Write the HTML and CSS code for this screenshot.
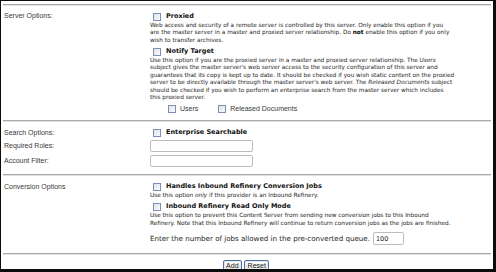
FILE: index.html
```html
<!DOCTYPE html>
<html>
<head>
<meta charset="utf-8">
<link rel="stylesheet" href="styles.css">
</head>
<body>
<div class="frame">
  <div class="sep first"></div>

  <section class="row server">
    <div class="label">Server Options:</div>
    <div class="field">
      <label class="opt"><input type="checkbox" class="cb"><b>Proxied</b></label>
      <p class="desc">Web access and security of a remote server is controlled by this server. Only enable this option if you<br>are the master server in a master and proxied server relationship. Do <b>not</b> enable this option if you only<br>wish to transfer archives.</p>
      <label class="opt"><input type="checkbox" class="cb"><b>Notify Target</b></label>
      <p class="desc">Use this option if you are the proxied server in a master and proxied server relationship. The <i>Users</i><br>subject gives the master server's web server access to the security configuration of this server and<br>guarantees that its copy is kept up to date. It should be checked if you wish static content on the proxied<br>server to be directly available through the master server's web server. The <i>Released Documents</i> subject<br>should be checked if you wish to perform an enterprise search from the master server which includes<br>this proxied server.</p>
      <div class="subopts">
        <label class="sub"><input type="checkbox" class="cb">Users</label>
        <label class="sub"><input type="checkbox" class="cb">Released Documents</label>
      </div>
    </div>
  </section>

  <div class="sep"></div>

  <section class="row search">
    <div class="label">Search Options:</div>
    <div class="field">
      <label class="opt"><input type="checkbox" class="cb"><b>Enterprise Searchable</b></label>
    </div>
    <div class="label inl roles">Required Roles:</div>
    <div class="field"><input type="text" class="txt roles"></div>
    <div class="label inl acct">Account Filter:</div>
    <div class="field"><input type="text" class="txt acct"></div>
  </section>

  <div class="sep"></div>

  <section class="row conv">
    <div class="label">Conversion Options</div>
    <div class="field">
      <label class="opt"><input type="checkbox" class="cb"><b>Handles Inbound Refinery Conversion Jobs</b></label>
      <p class="desc">Use this option <i>only</i> if this provider is an Inbound Refinery.</p>
      <label class="opt"><input type="checkbox" class="cb"><b>Inbound Refinery Read Only Mode</b></label>
      <p class="desc">Use this option to prevent this Content Server from sending new conversion jobs to this Inbound<br>Refinery. Note that this Inbound Refinery will continue to return conversion jobs as the jobs are finished.</p>
      <div class="queue">
        <span>Enter the number of jobs allowed in the pre-converted queue.</span>
        <input type="text" class="txt small" value="100">
      </div>
    </div>
  </section>

  <div class="sep"></div>

  <div class="actions">
    <button class="btn">Add</button>
    <button class="btn">Reset</button>
  </div>
</div>
</body>
</html>
```
FILE: styles.css
```css
html, body {
  margin: 0;
  padding: 0;
  background: #fff;
}

.frame {
  width: 496px;
  height: 272px;
  box-sizing: border-box;
  border-style: solid;
  border-color: #0c0c0c;
  border-width: 1px 3px 3px 1px;
  background: #fff;
  overflow: hidden;
  display: flex;
  flex-direction: column;
}

.sep {
  margin: 0 2px;
  height: 0;
  border-top: 1px solid #a9a9a9;
  border-bottom: 1px solid #e2e2e2;
}
.sep.first { margin-top: 3px; }

.row {
  display: grid;
  grid-template-columns: 146px 1fr;
  padding-left: 3px;
  align-items: start;
}

.label {
  font: 7px/9px "Liberation Sans", Arial, sans-serif;
  color: #3a3a3a;
  white-space: nowrap;
}

.field {
  min-width: 0;
}

.opt {
  display: flex;
  align-items: center;
  gap: 5px;
  height: 9px;
  padding-left: 3px;
  font: bold 6.5px/9px "DejaVu Sans", Verdana, sans-serif;
  color: #111;
  white-space: nowrap;
}

.cb {
  appearance: none;
  -webkit-appearance: none;
  margin: 0;
  width: 8px;
  height: 8px;
  box-sizing: border-box;
  border: 1px solid #7d90b0;
  background: linear-gradient(135deg, #dde3ec, #fbfcfd);
  flex: none;
}

.desc {
  margin: 1px 0 2.8px;
  font: 5.78px/7.4px "DejaVu Sans", Verdana, sans-serif;
  color: #1e1e1e;
  white-space: nowrap;
}
.desc b { font-weight: bold; color: #000; }

/* server */
.server { padding-top: 6px; padding-bottom: 6.5px; }
.server .label { margin-top: -1px; }

.subopts {
  display: flex;
  align-items: center;
  gap: 20px;
  height: 9px;
  padding-left: 18px;
  margin-top: 0.5px;
}
.sub {
  display: flex;
  align-items: center;
  gap: 4px;
  font: 7px/9px "Liberation Sans", Arial, sans-serif;
  color: #3a3a3a;
}

/* search */
.search { padding-top: 6.5px; padding-bottom: 7px; }
.txt {
  appearance: none;
  -webkit-appearance: none;
  margin: 0;
  box-sizing: border-box;
  width: 103px;
  height: 12px;
  border: 1px solid #bdbdbd;
  border-radius: 2px;
  background: #fff;
  padding: 0 2px;
  font: 6.5px "DejaVu Sans", Verdana, sans-serif;
  color: #222;
  display: block;
}
.txt.roles { margin-top: 2.5px; }
.txt.acct { margin-top: 3px; }
.label.inl.roles { margin-top: 4px; }
.label.inl.acct { margin-top: 4.5px; }

/* conversion */
.conv { padding-top: 6.5px; padding-bottom: 8px; }
.conv .desc { margin-bottom: 2.5px; }
.queue {
  display: flex;
  align-items: center;
  gap: 3px;
  margin-top: 5.5px;
  font: 7.1px/12px "DejaVu Sans", Verdana, sans-serif;
  color: #222;
  white-space: nowrap;
}
.txt.small { width: 31px; height: 13px; }

/* actions */
.actions {
  display: flex;
  justify-content: center;
  gap: 2px;
  margin-top: 5px;
  padding-right: 2px;
}
.btn {
  margin: 0;
  height: 11px;
  padding: 0 2.5px;
  box-sizing: border-box;
  border: 1px solid #4a6f9c;
  border-radius: 2px;
  box-shadow: inset 0 0 0 1px #e4ebf4;
  background: linear-gradient(#ffffff, #e4e4e4);
  font: 7px/9px "Liberation Sans", Arial, sans-serif;
  color: #222;
}
```
